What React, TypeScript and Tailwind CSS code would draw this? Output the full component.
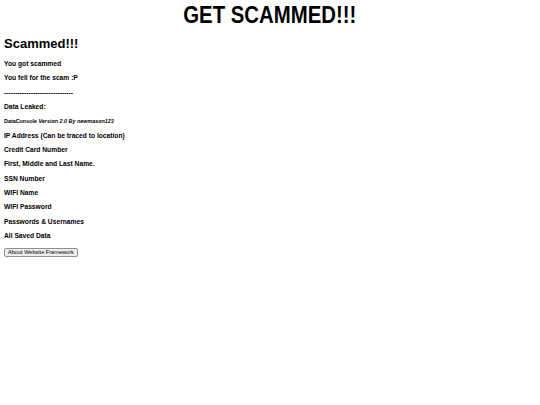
const items = [
  'IP Address (Can be traced to location)',
  'Credit Card Number',
  'First, Middle and Last Name.',
  'SSN Number',
  'WIFI Name',
  'WIFI Password',
  'Passwords & Usernames',
  'All Saved Data',
];

export default function App() {
  return (
    <div className="min-h-[405px] bg-white px-[4px] text-black font-['Liberation_Sans',Arial,sans-serif]">
      <div className="pt-[3px] text-center">
        <h1 className="inline-block origin-center scale-x-[0.885] text-[23px] font-bold leading-[24px]">
          GET SCAMMED!!!
        </h1>
      </div>
      <h2 className="mt-[6px] text-[13px] font-bold leading-[16px]">Scammed!!!</h2>
      <div className="mt-[5px] flex flex-col text-[6.7px] font-bold leading-[14.35px]">
        <p>You got scammed</p>
        <p>You fell for the scam :P</p>
        <p>-------------------------------</p>
        <p>Data Leaked:</p>
        <p className="text-[5.4px]">
          DataConsole <i>Version 2.0 By newmason123</i>
        </p>
        {items.map((t) => (
          <p key={t}>{t}</p>
        ))}
      </div>
      <button className="mt-[5px] block rounded-[2px] border border-[#8f8f8f] bg-[#efefef] px-[3px] text-[5.6px] leading-[7px]">
        About Website Framework
      </button>
    </div>
  );
}
